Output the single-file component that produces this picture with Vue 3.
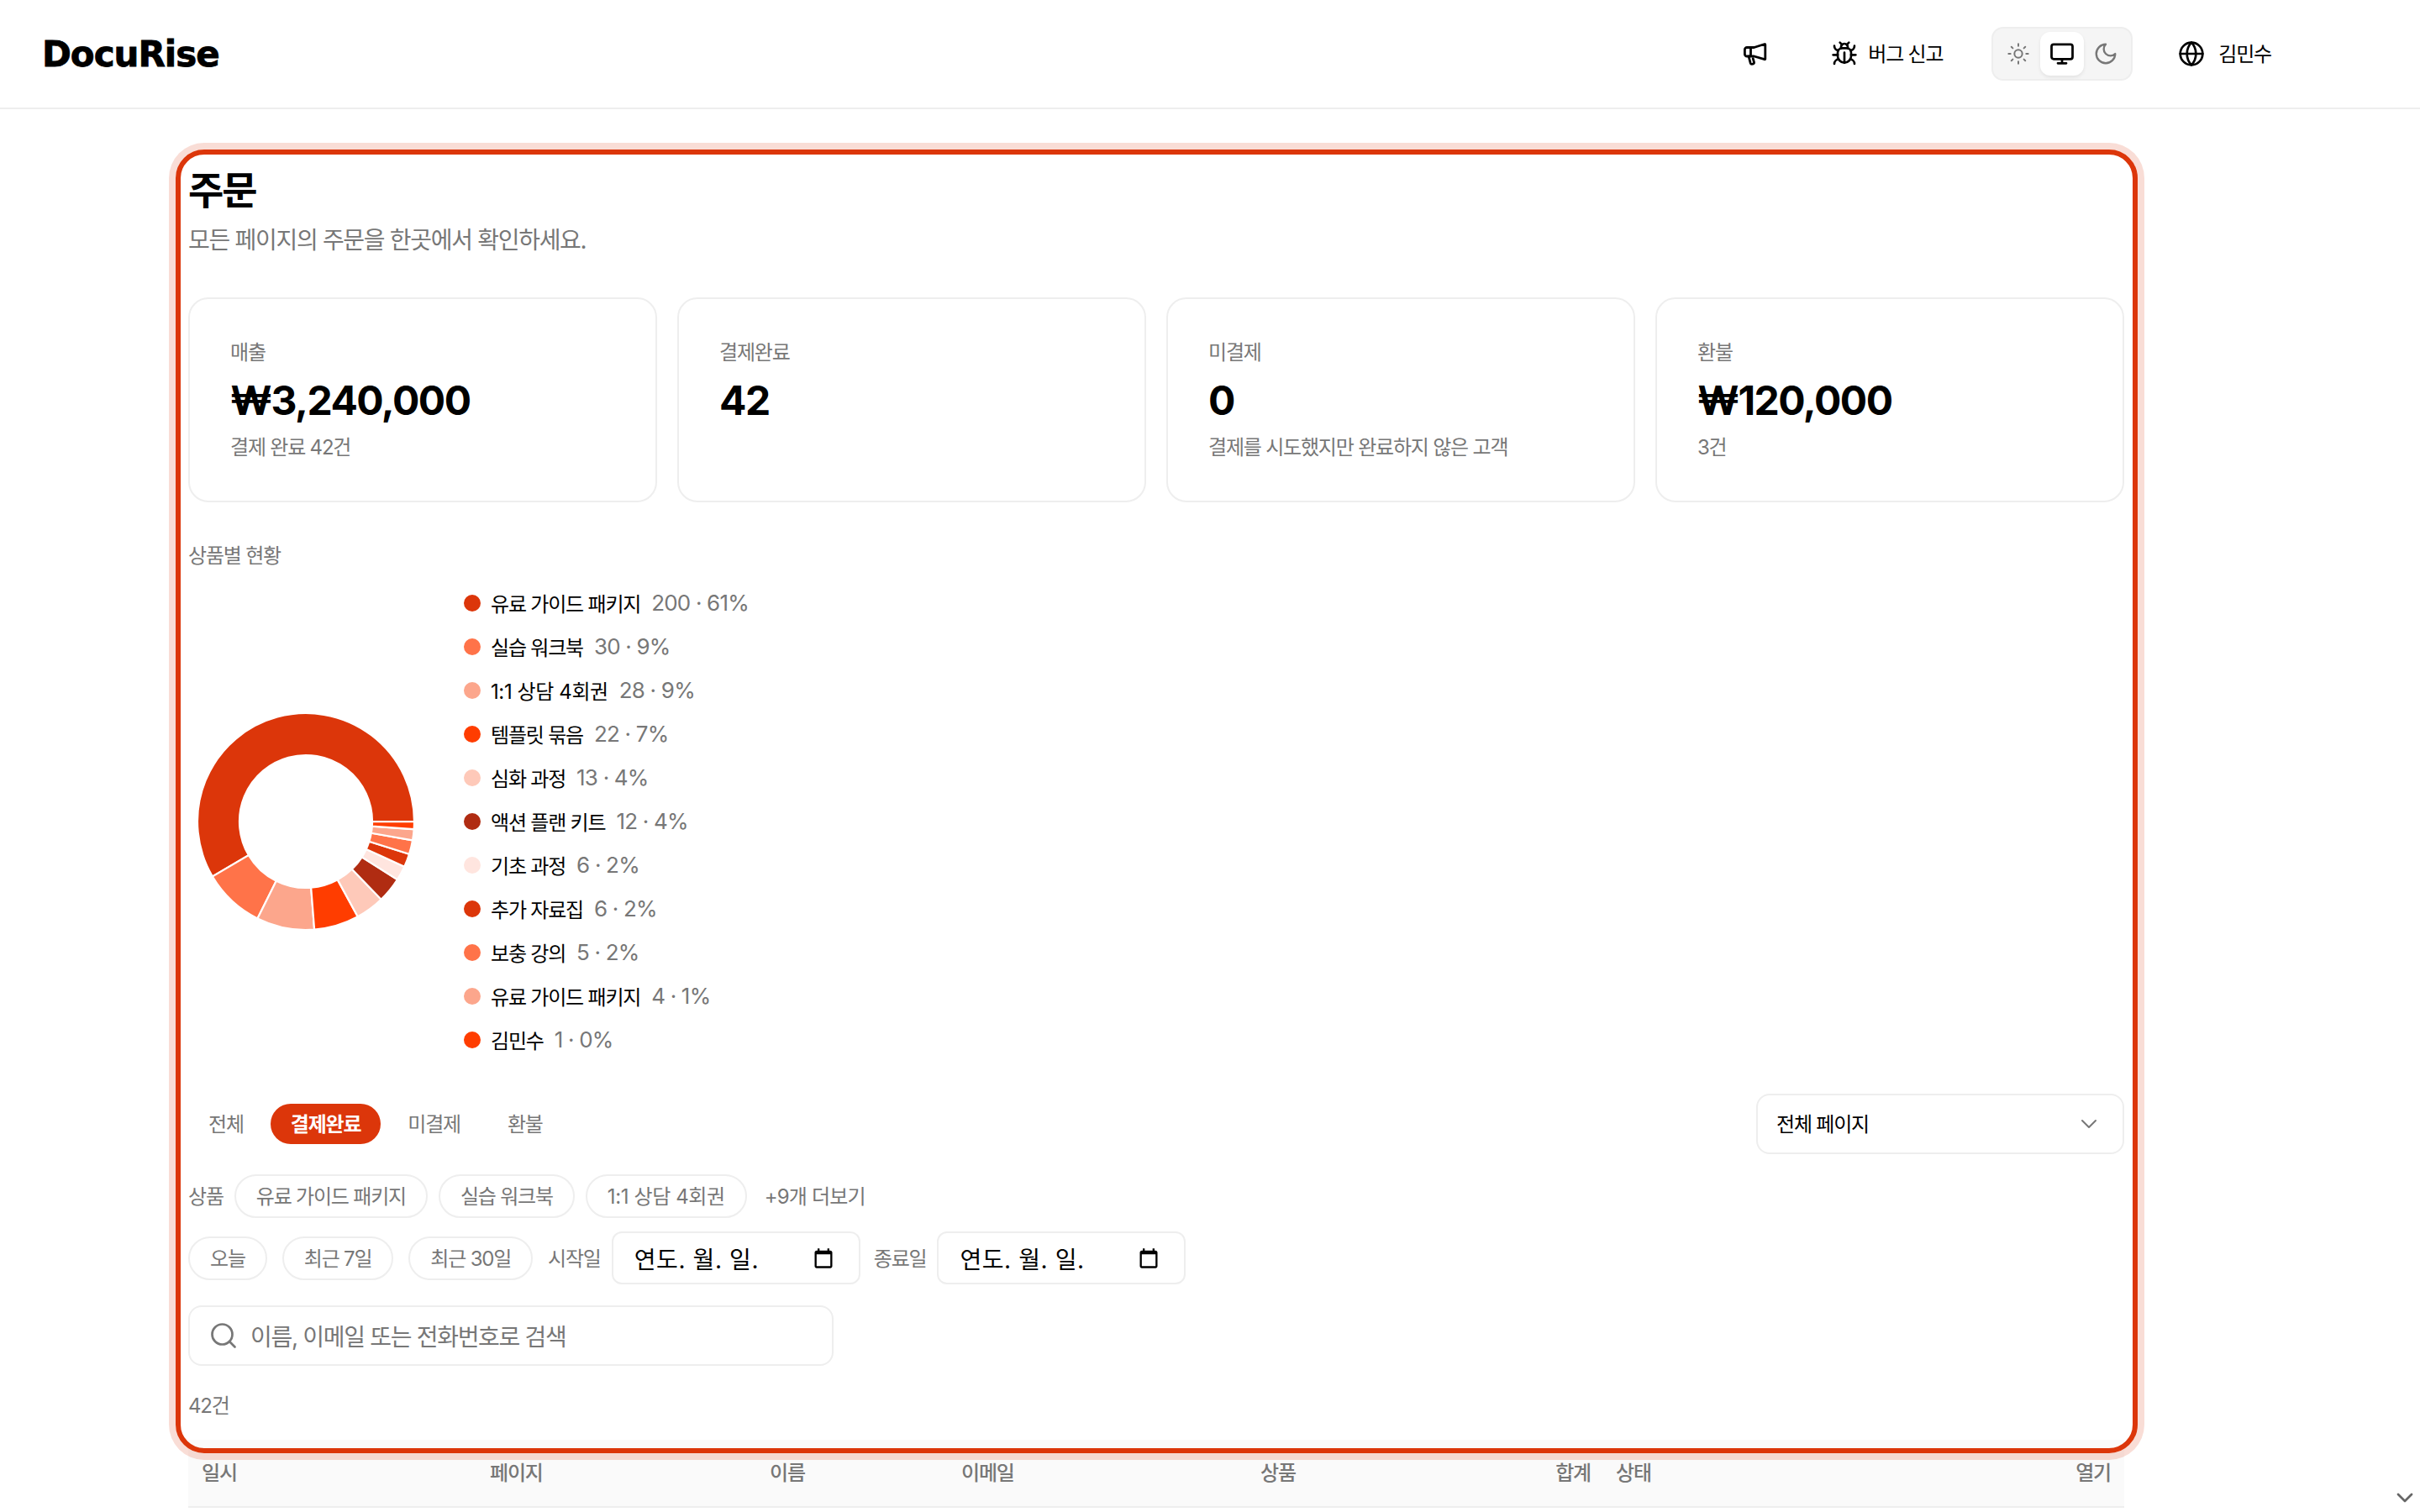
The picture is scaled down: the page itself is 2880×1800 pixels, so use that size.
<script setup>
const stats = [
    { label: '매출', value: '₩3,240,000', sub: '결제 완료 42건' },
    { label: '결제완료', value: '42', sub: '' },
    { label: '미결제', value: '0', sub: '결제를 시도했지만 완료하지 않은 고객' },
    { label: '환불', value: '₩120,000', sub: '3건' },
];

// sweep is in degrees, small slices are kept wider than their share
const products = [
    { name: '유료 가이드 패키지', meta: '200 · 61%', color: '#dc360a', sweep: 210.5 },
    { name: '실습 워크북', meta: '30 · 9%', color: '#ff7349', sweep: 33 },
    { name: '1:1 상담 4회권', meta: '28 · 9%', color: '#fca68c', sweep: 31 },
    { name: '템플릿 묶음', meta: '22 · 7%', color: '#ff3d00', sweep: 24.1 },
    { name: '심화 과정', meta: '13 · 4%', color: '#fec9b9', sweep: 15.4 },
    { name: '액션 플랜 키트', meta: '12 · 4%', color: '#b02c12', sweep: 13.6 },
    { name: '기초 과정', meta: '6 · 2%', color: '#ffe5df', sweep: 7.8 },
    { name: '추가 자료집', meta: '6 · 2%', color: '#dc360a', sweep: 7.1 },
    { name: '보충 강의', meta: '5 · 2%', color: '#ff7349', sweep: 7.5 },
    { name: '유료 가이드 패키지', meta: '4 · 1%', color: '#fca68c', sweep: 5.9 },
    { name: '김민수', meta: '1 · 0%', color: '#ff3d00', sweep: 4 },
];

const point = (r, deg) => {
    const a = (deg * Math.PI) / 180;
    return `${(140 + r * Math.cos(a)).toFixed(2)} ${(140 - r * Math.sin(a)).toFixed(2)}`;
};

let start = 0;
const slices = products.map((p) => {
    const end = start + p.sweep;
    const large = p.sweep > 180 ? 1 : 0;
    const d = `M${point(129, start)} A129 129 0 ${large} 0 ${point(129, end)} L${point(79, end)} A79 79 0 ${large} 1 ${point(79, start)} Z`;
    start = end;
    return { d, color: p.color };
});

const tabs = ['전체', '결제완료', '미결제', '환불'];
const productChips = ['유료 가이드 패키지', '실습 워크북', '1:1 상담 4회권'];
const ranges = ['오늘', '최근 7일', '최근 30일'];
const columns = ['일시', '페이지', '이름', '이메일', '상품', '합계', '상태', '열기'];

// names with digits run wider than plain hangul
const hasDigits = (text) => /\d/.test(text);
</script>

<template>
    <div class="page">
        <header class="topbar">
            <div class="logo">DocuRise</div>
            <div class="topbar-right">
                <svg class="icon-news" width="32" height="32" viewBox="0 0 32 32" fill="none" stroke="currentColor" stroke-width="2.8" stroke-linejoin="round" stroke-linecap="round">
                    <path d="M6 8.500h8.500L27 4.500a.6.6 0 0 1 .8.6v17a.6.6 0 0 1-.8.6l-12.500-3.700H6a2.600 2.600 0 0 1-2.600-2.600v-5.300A2.600 2.600 0 0 1 6 8.500Z" />
                    <path d="M10.500 8.800v10M8 19l2.200 8.200c.6 1.800 4.800 1.200 4.300-1l-1.300-4.500" />
                </svg>
                <button class="bug-btn">
                    <svg width="32" height="32" viewBox="0 0 24 24" fill="none" stroke="currentColor" stroke-width="2" stroke-linecap="round" stroke-linejoin="round">
                        <path d="m8 2 1.880 1.880" /><path d="M14.120 3.880 16 2" /><path d="M9 7.130v-1a3.003 3.003 0 1 1 6 0v1" />
                        <path d="M12 20c-3.300 0-6-2.700-6-6v-3a4 4 0 0 1 4-4h4a4 4 0 0 1 4 4v3c0 3.300-2.700 6-6 6" /><path d="M12 20v-9" />
                        <path d="M6.530 9C4.600 8.800 3 7.100 3 5" /><path d="M6 13H2" /><path d="M3 21c0-2.100 1.700-3.900 3.800-4" />
                        <path d="M20.970 5c0 2.100-1.600 3.800-3.500 4" /><path d="M22 13h-4" /><path d="M17.200 17c2.100.1 3.800 1.900 3.800 4" />
                    </svg>
                    <span class="nav-text">버그 신고</span>
                </button>
                <div class="theme-toggle">
                    <span class="theme-btn">
                        <svg width="28" height="28" viewBox="0 0 24 24" fill="none" stroke="currentColor" stroke-width="1.700" stroke-linecap="round" stroke-linejoin="round">
                            <circle cx="12" cy="12" r="4" />
                            <path d="M12 2v2M12 20v2M4.930 4.930l1.410 1.410M17.660 17.660l1.410 1.410M2 12h2M20 12h2M6.340 17.660l-1.410 1.410M19.070 4.930l-1.410 1.410" />
                        </svg>
                    </span>
                    <span class="theme-btn active">
                        <svg width="30" height="30" viewBox="0 0 24 24" fill="none" stroke="currentColor" stroke-width="2.200" stroke-linecap="round" stroke-linejoin="round">
                            <rect x="2" y="3" width="20" height="14" rx="2" /><path d="M8 21h8M12 17v4" />
                        </svg>
                    </span>
                    <span class="theme-btn">
                        <svg width="30" height="30" viewBox="0 0 24 24" fill="none" stroke="currentColor" stroke-width="1.900" stroke-linecap="round" stroke-linejoin="round">
                            <path d="M12 3a6 6 0 0 0 9 9 9 9 0 1 1-9-9Z" />
                        </svg>
                    </span>
                </div>
                <button class="lang-btn">
                    <svg width="32" height="32" viewBox="0 0 24 24" fill="none" stroke="currentColor" stroke-width="2" stroke-linecap="round" stroke-linejoin="round">
                        <circle cx="12" cy="12" r="10" /><path d="M12 2a14.500 14.500 0 0 0 0 20 14.500 14.500 0 0 0 0-20" /><path d="M2 12h20" />
                    </svg>
                    <span class="nav-text">김민수</span>
                </button>
            </div>
        </header>

        <main class="content">
            <h1 class="title">주문</h1>
            <p class="subtitle">모든 페이지의 주문을 한곳에서 확인하세요.</p>

            <section class="stats">
                <div v-for="s in stats" :key="s.label" class="stat-card">
                    <div class="stat-label">{{ s.label }}</div>
                    <div class="stat-value">{{ s.value }}</div>
                    <div v-if="s.sub" class="stat-sub">{{ s.sub }}</div>
                </div>
            </section>

            <div class="section-label">상품별 현황</div>
            <section class="breakdown">
                <svg class="donut" width="280" height="280" viewBox="0 0 280 280">
                    <path v-for="(s, i) in slices" :key="i" :d="s.d" :fill="s.color" stroke="#fff" stroke-width="2.200" />
                </svg>
                <ul class="legend">
                    <li v-for="(p, i) in products" :key="i" class="legend-row">
                        <span class="dot" :style="{ background: p.color }"></span>
                        <span :class="['legend-name', { wide: hasDigits(p.name) }]">{{ p.name }}</span>
                        <span class="legend-meta">{{ p.meta }}</span>
                    </li>
                </ul>
            </section>

            <div class="tabs-row">
                <div class="tabs">
                    <button v-for="t in tabs" :key="t" :class="['tab', { active: t === '결제완료' }]">{{ t }}</button>
                </div>
                <div class="select">
                    <span class="nav-text">전체 페이지</span>
                    <svg width="32" height="32" viewBox="0 0 24 24" fill="none" stroke="#777" stroke-width="1.500" stroke-linecap="round" stroke-linejoin="round">
                        <path d="m6 9 6 6 6-6" />
                    </svg>
                </div>
            </div>

            <div class="filter-row products-row">
                <span class="filter-label">상품</span>
                <button v-for="c in productChips" :key="c" :class="['chip', { wide: hasDigits(c) }]">{{ c }}</button>
                <span class="filter-label more">+9개 더보기</span>
            </div>

            <div class="filter-row dates-row">
                <button v-for="r in ranges" :key="r" class="chip">{{ r }}</button>
                <span class="filter-label">시작일</span>
                <div class="date-input start">
                    <span>연도. 월. 일.</span>
                    <svg width="28" height="28" viewBox="0 0 24 24" fill="#000"><path d="M19 4h-1V2h-2v2H8V2H6v2H5c-1.100 0-2 .9-2 2v14c0 1.100.9 2 2 2h14c1.100 0 2-.9 2-2V6c0-1.100-.9-2-2-2zm0 16H5V8h14v12z" /></svg>
                </div>
                <span class="filter-label end-label">종료일</span>
                <div class="date-input end">
                    <span>연도. 월. 일.</span>
                    <svg width="28" height="28" viewBox="0 0 24 24" fill="#000"><path d="M19 4h-1V2h-2v2H8V2H6v2H5c-1.100 0-2 .9-2 2v14c0 1.100.9 2 2 2h14c1.100 0 2-.9 2-2V6c0-1.100-.9-2-2-2zm0 16H5V8h14v12z" /></svg>
                </div>
            </div>

            <div class="search">
                <svg width="36" height="36" viewBox="0 0 24 24" fill="none" stroke="#777" stroke-width="1.800" stroke-linecap="round" stroke-linejoin="round">
                    <circle cx="11" cy="11" r="8" /><path d="m21 21-4.300-4.300" />
                </svg>
                <span>이름, 이메일 또는 전화번호로 검색</span>
            </div>

            <div class="count">42건</div>

            <div class="table-head">
                <span v-for="c in columns" :key="c" class="th">{{ c }}</span>
            </div>
        </main>

        <div class="highlight"></div>
        <svg class="scroll-hint" width="32" height="32" viewBox="0 0 24 24" fill="none" stroke="#666" stroke-width="2" stroke-linecap="round" stroke-linejoin="round">
            <path d="m6 9 6 6 6-6" />
        </svg>
    </div>
</template>

<style scoped>
.page {
    position: relative;
    width: 2880px;
    height: 1800px;
    overflow: hidden;
    background: #fff;
    color: #000;
    font-family: Inter, "Noto Sans CJK KR", "Noto Sans", sans-serif;
    font-size: 24px;
    letter-spacing: -1.2px;
}

button {
    font-family: inherit;
    font-size: inherit;
    letter-spacing: inherit;
    background: none;
    border: 0;
    padding: 0;
    color: inherit;
}

.topbar {
    height: 128px;
    border-bottom: 2px solid #eee;
    display: flex;
    align-items: center;
    justify-content: space-between;
    padding: 0 177px 0 50px;
}

.logo {
    font-family: "DejaVu Sans", sans-serif;
    font-size: 42px;
    font-weight: 700;
    letter-spacing: -1px;
    -webkit-text-stroke: 0.8px #000;
}

.topbar-right {
    display: flex;
    align-items: center;
}

.nav-text {
    padding-bottom: 3px;
}

.bug-btn {
    display: flex;
    align-items: center;
    gap: 12px;
    margin-left: 74px;
}

.theme-toggle {
    display: flex;
    margin-left: 58px;
    padding: 4px;
    background: #f5f5f5;
    border: 2px solid #eee;
    border-radius: 14px;
}

.theme-btn {
    width: 52px;
    height: 52px;
    display: flex;
    align-items: center;
    justify-content: center;
    color: #777;
    border-radius: 12px;
}

.theme-btn.active {
    background: #fff;
    color: #000;
    box-shadow: 0 2px 4px rgba(0, 0, 0, 0.08);
}

.lang-btn {
    display: flex;
    align-items: center;
    gap: 16px;
    margin-left: 54px;
}

.content {
    width: 2304px;
    margin-left: 224px;
    padding-top: 64px;
}

.title {
    margin: 0;
    font-size: 46px;
    line-height: 64px;
    font-weight: 700;
    letter-spacing: -2px;
}

.subtitle {
    margin: 8px 0 0;
    font-size: 28px;
    line-height: 40px;
    color: #777;
    letter-spacing: -1.3px;
}

.stats {
    display: grid;
    grid-template-columns: repeat(4, 1fr);
    gap: 24px;
    margin-top: 48px;
}

.stat-card {
    min-height: 244px;
    box-sizing: border-box;
    padding: 46px 48px 0;
    border: 2px solid #eee;
    border-radius: 24px;
}

.stat-label {
    line-height: 36px;
    color: #777;
}

.stat-value {
    margin-top: 9px;
    font-size: 48px;
    line-height: 60px;
    font-weight: 700;
    letter-spacing: -1.5px;
}

.stat-sub {
    margin-top: 8px;
    line-height: 36px;
    color: #777;
}

.section-label {
    margin-top: 46px;
    line-height: 36px;
    color: #777;
}

.breakdown {
    display: flex;
    align-items: center;
    gap: 48px;
    margin-top: 12px;
}

.legend {
    list-style: none;
    margin: 0;
    padding: 0;
}

.legend-row {
    height: 52px;
    display: flex;
    align-items: center;
}

.dot {
    width: 20px;
    height: 20px;
    border-radius: 50%;
    margin-right: 12px;
}

.legend-name {
    padding-bottom: 1px;
}

.legend-name.wide,
.chip.wide {
    letter-spacing: -0.4px;
}

.legend-meta {
    margin-left: 13px;
    padding-bottom: 1px;
    font-size: 26px;
    color: #777;
    letter-spacing: -0.8px;
}

.tabs-row {
    display: flex;
    justify-content: space-between;
    align-items: center;
    margin-top: 38px;
}

.tabs {
    display: flex;
    align-items: center;
    gap: 8px;
}

.tab {
    height: 48px;
    padding: 0 24px 3px;
    border-radius: 24px;
    color: #777;
}

.tab.active {
    background: #dc360a;
    color: #fff;
    font-weight: 600;
}

.select {
    width: 438px;
    height: 72px;
    box-sizing: border-box;
    padding: 0 24px 0 22px;
    display: flex;
    align-items: center;
    justify-content: space-between;
    border: 2px solid #eee;
    border-radius: 16px;
}

.filter-row {
    display: flex;
    align-items: center;
}

.products-row {
    margin-top: 24px;
    gap: 13px;
}

.dates-row {
    margin-top: 16px;
    gap: 18px;
}

.filter-label {
    padding-bottom: 3px;
    color: #777;
}

.chip {
    height: 52px;
    box-sizing: border-box;
    padding: 0 24px 3px;
    border: 2px solid #eee;
    border-radius: 26px;
    color: #777;
}

.more {
    margin-left: 8px;
    letter-spacing: -0.8px;
}

.date-input {
    width: 296px;
    height: 63px;
    box-sizing: border-box;
    padding: 0 28px 0 25px;
    display: flex;
    align-items: center;
    justify-content: space-between;
    border: 2px solid #eee;
    border-radius: 12px;
    font-size: 28px;
    letter-spacing: 0.6px;
}

.date-input.start {
    margin-left: -5px;
}

.end-label {
    margin-left: -2px;
}

.date-input.end {
    margin-left: -5px;
}

.search {
    width: 768px;
    height: 72px;
    box-sizing: border-box;
    margin-top: 25px;
    padding: 0 22px 0 22px;
    display: flex;
    align-items: center;
    gap: 14px;
    border: 2px solid #eee;
    border-radius: 16px;
    font-size: 28px;
    color: #777;
    letter-spacing: -1.3px;
}

.count {
    margin-top: 30px;
    line-height: 36px;
    color: #777;
}

.table-head {
    display: grid;
    grid-template-columns: 343px 333px 228px 356px 342px 81px 1fr 100px;
    margin-top: 22px;
    height: 81px;
    box-sizing: border-box;
    padding-top: 22px;
    background: #fafafa;
    border-bottom: 2px solid #eee;
}

.th {
    padding: 0 16px;
    line-height: 36px;
    color: #777;
    font-weight: 500;
    white-space: nowrap;
}

.th:nth-child(6) {
    padding: 0 14px 0 0;
    justify-self: end;
}

.th:last-child {
    text-align: right;
}

.highlight {
    position: absolute;
    left: 209px;
    top: 178px;
    width: 2335px;
    height: 1552px;
    box-sizing: border-box;
    border: 6px solid #dc360a;
    border-radius: 34px;
    box-shadow: 0 0 0 8px rgba(220, 54, 10, 0.17);
    pointer-events: none;
}

.scroll-hint {
    position: absolute;
    left: 2846px;
    top: 1767px;
}
</style>

<style>
body {
    margin: 0;
}
</style>
